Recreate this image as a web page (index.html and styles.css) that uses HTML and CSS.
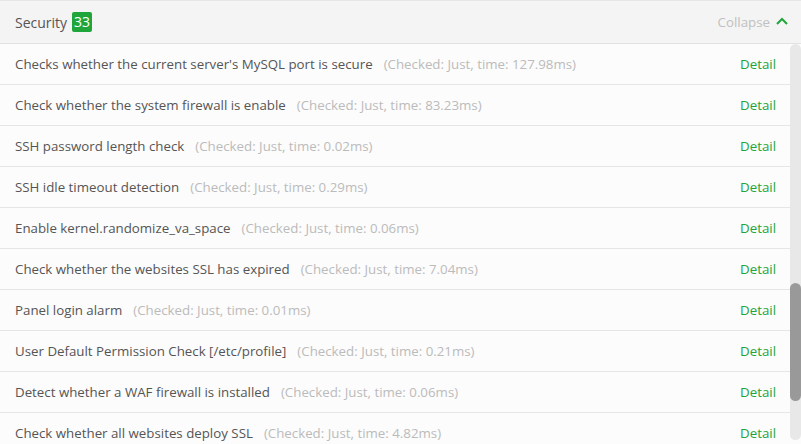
FILE: index.html
```html
<!DOCTYPE html>
<html>
<head>
<meta charset="utf-8">
<link rel="stylesheet" href="styles.css">
</head>
<body>
<div class="panel">
  <div class="header">
    <div class="title">Security <span class="badge">33</span></div>
    <div class="collapse">Collapse
      <svg class="chev" width="12" height="8" viewBox="0 0 12 8"><path d="M1 7 L6 2 L11 7" fill="none" stroke="#20a53a" stroke-width="2"/></svg>
    </div>
  </div>
  <div class="body">
    <ul class="list">
      <li class="row"><span class="name">Checks whether the current server's MySQL port is secure</span><span class="meta">(Checked: Just, time: 127.98ms)</span><a class="detail">Detail</a></li>
      <li class="row"><span class="name">Check whether the system firewall is enable</span><span class="meta">(Checked: Just, time: 83.23ms)</span><a class="detail">Detail</a></li>
      <li class="row"><span class="name">SSH password length check</span><span class="meta">(Checked: Just, time: 0.02ms)</span><a class="detail">Detail</a></li>
      <li class="row"><span class="name">SSH idle timeout detection</span><span class="meta">(Checked: Just, time: 0.29ms)</span><a class="detail">Detail</a></li>
      <li class="row"><span class="name">Enable kernel.randomize_va_space</span><span class="meta">(Checked: Just, time: 0.06ms)</span><a class="detail">Detail</a></li>
      <li class="row"><span class="name">Check whether the websites SSL has expired</span><span class="meta">(Checked: Just, time: 7.04ms)</span><a class="detail">Detail</a></li>
      <li class="row"><span class="name">Panel login alarm</span><span class="meta">(Checked: Just, time: 0.01ms)</span><a class="detail">Detail</a></li>
      <li class="row"><span class="name">User Default Permission Check [/etc/profile]</span><span class="meta">(Checked: Just, time: 0.21ms)</span><a class="detail">Detail</a></li>
      <li class="row"><span class="name">Detect whether a WAF firewall is installed</span><span class="meta">(Checked: Just, time: 0.06ms)</span><a class="detail">Detail</a></li>
      <li class="row"><span class="name">Check whether all websites deploy SSL</span><span class="meta">(Checked: Just, time: 4.82ms)</span><a class="detail">Detail</a></li>
    </ul>
    <div class="scrollbar"><div class="thumb"></div></div>
  </div>
</div>
</body>
</html>
```

FILE: styles.css
```css
html, body {
  margin: 0;
  padding: 0;
  background: #fcfcfc;
  overflow: hidden;
}
body {
  font-family: "Open Sans", "Liberation Sans", sans-serif;
  width: 801px;
  height: 444px;
}
.panel {
  display: flex;
  flex-direction: column;
  height: 444px;
}
.header {
  height: 42px;
  flex: none;
  background: #f4f4f4;
  border-top: 1px solid #e6e6e6;
  border-bottom: 1px solid #e2e2e2;
  display: flex;
  align-items: center;
  justify-content: space-between;
  padding: 0 13px 0 15px;
}
.title {
  font-size: 14px;
  color: #555;
  display: flex;
  align-items: center;
  gap: 5px;
}
.badge {
  background: #20a53a;
  color: #fff;
  border-radius: 2px;
  padding: 0 2px;
  height: 20px;
  line-height: 20px;
  font-size: 14px;
}
.collapse {
  font-size: 13.3px;
  color: #c0c0c0;
  display: flex;
  align-items: center;
  gap: 6px;
}
.chev { margin-top: -3px; }
.body {
  display: flex;
  flex: 1;
  min-height: 0;
}
.list {
  list-style: none;
  margin: 0;
  padding: 0;
  flex: 1;
}
.row {
  height: 40px;
  border-bottom: 1px solid #e6e6e6;
  display: flex;
  align-items: center;
  padding: 0 14px 0 15px;
  font-size: 13.3px;
}
.name { color: #555; }
.meta { color: #bbb; margin-left: 11px; }
.detail {
  margin-left: auto;
  color: #20a53a;
}
.scrollbar {
  width: 11px;
  flex: none;
  background: #e8e8e8;
  border-radius: 6px;
  margin-bottom: 4px;
  padding-top: 239px;
  box-sizing: border-box;
}
.thumb {
  height: 118px;
  background: #999;
  border-radius: 6px;
}
```
